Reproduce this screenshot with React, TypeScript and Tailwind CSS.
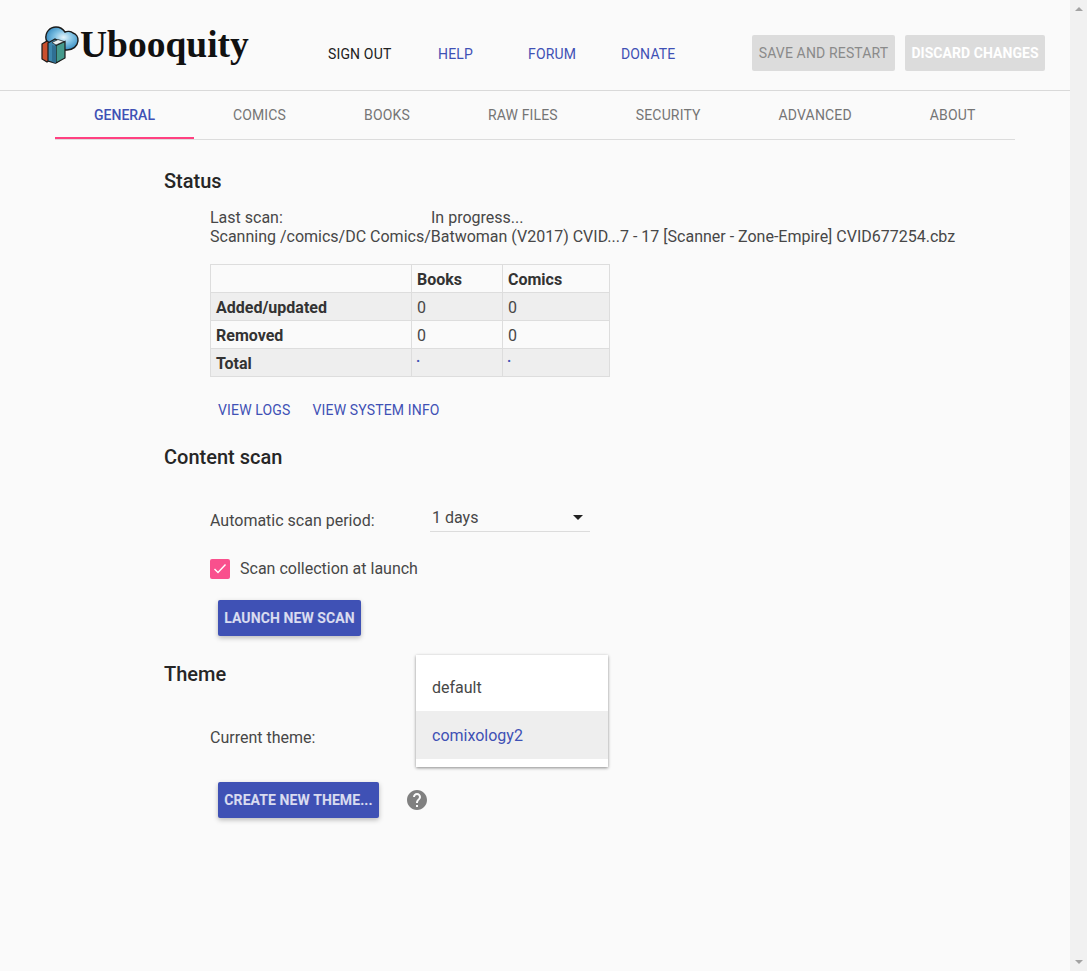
import { MdHelp } from 'react-icons/md'

const tabs = ['General', 'Comics', 'Books', 'Raw files', 'Security', 'Advanced', 'About']

function Logo() {
    return (
        <svg width="40" height="40" viewBox="0 0 40 40" className="shrink-0">
            <defs>
                <radialGradient id="cloud" cx="0.55" cy="0.45" r="0.6">
                    <stop offset="0" stopColor="#e4f3fa" />
                    <stop offset="0.5" stopColor="#7cbfe2" />
                    <stop offset="1" stopColor="#2f86bd" />
                </radialGradient>
            </defs>
            <path d="M6 14 C5 7 10 2 16 2 C20 2 23 4 25 7 C27 6 31 6 33 8 C36 9 38.5 12 38 16 C37.5 21 33 25 27 25 L14 25 L8 20 Z" fill="url(#cloud)" stroke="#1a1a1a" strokeWidth="1.4" />
            <path d="M2 19 L7 16 L10 18 L10 35 L7 37 L2 34 Z" fill="#c9502e" stroke="#1a1a1a" strokeWidth="1.2" />
            <path d="M8 18 L15 14 L19 16 L19 36 L15 38 L8 36 Z" fill="#3d87ad" stroke="#1a1a1a" strokeWidth="1.2" />
            <path d="M16 20.5 L25 16.5 L25 33 L16 38 Z" fill="#459a8c" stroke="#1a1a1a" strokeWidth="1.2" />
            <path d="M12 17.5 L18 14.5 L24 16.5 L16 20 Z" fill="#e8f0f2" stroke="#1a1a1a" strokeWidth="0.7" />
            <path d="M12 20 L16 21 L16 38 L12 37 Z" fill="#2f6f93" />
        </svg>
    )
}

function Heading({ children, className }: { children: string; className: string }) {
    return <h2 className={`text-[20px] leading-[28px] font-medium text-[#262626] ${className}`}>{children}</h2>
}

function RaisedButton({ children, className }: { children: string; className: string }) {
    return (
        <button className={`h-9 rounded-[2px] bg-[#3f51b5] text-sm font-bold tracking-[0.1px] text-white/80 uppercase shadow-[0_2px_5px_rgba(0,0,0,0.26)] ${className}`}>
            {children}
        </button>
    )
}

export default function App() {
    return (
        <div className="flex h-[971px] overflow-hidden bg-[#fafafa] font-['Roboto',sans-serif] text-[#474747]">
            <div className="w-[1070px] shrink-0">
                <header className="flex h-[91px] items-center border-b border-[#d9d9d9] text-sm tracking-[0.15px] uppercase">
                    <div className="ml-[40px] flex w-[288px] items-center">
                        <Logo />
                        <span className="font-['Liberation_Serif',serif] text-[37.5px] leading-none font-bold tracking-normal text-[#111] normal-case">Ubooquity</span>
                    </div>
                    <a className="mt-[18px] w-[110px] text-[#212121]">Sign out</a>
                    <a className="mt-[18px] w-[90px] text-[#3f51b5]">Help</a>
                    <a className="mt-[18px] w-[93px] text-[#3f51b5]">Forum</a>
                    <a className="mt-[18px] w-[131px] text-[#3f51b5]">Donate</a>
                    <button className="mt-[16px] h-9 w-[143px] rounded-[2px] bg-[#dcdcdc] text-sm text-[#8a8a8a] uppercase">Save and restart</button>
                    <button className="mt-[16px] ml-[10px] h-9 w-[140px] rounded-[2px] bg-[#dcdcdc] text-sm font-bold tracking-[0.05px] text-white uppercase">Discard changes</button>
                </header>

                <nav className="ml-[55px] flex h-[49px] w-[960px] border-b border-[#dcdcdc] text-sm whitespace-nowrap uppercase">
                    {tabs.map((tab, i) => (
                        <a
                            key={tab}
                            className={`flex h-[48px] items-center border-b-2 px-[39px] pt-[1px] ${i === 0 ? 'border-[#ff4081] font-medium text-[#3f51b5]' : 'border-transparent tracking-[0.15px] text-[#757575]'}`}
                        >
                            {tab}
                        </a>
                    ))}
                </nav>

                <main className="relative pl-[164px]">
                    <Heading className="mt-[27px]">Status</Heading>

                    <div className="mt-[13px] ml-[46px] text-base leading-[19px]">
                        <div className="flex">
                            <span className="w-[221px]">Last scan:</span>
                            <span>In progress...</span>
                        </div>
                        <div>Scanning /comics/DC Comics/Batwoman (V2017) CVID...7 - 17 [Scanner - Zone-Empire] CVID677254.cbz</div>
                    </div>

                    <table className="mt-[18px] ml-[46px] w-[399px] table-fixed border-collapse text-base leading-[25px]">
                        <colgroup>
                            <col className="w-[201px]" />
                            <col className="w-[91px]" />
                            <col className="w-[107px]" />
                        </colgroup>
                        <tbody>
                            <tr className="h-[28px]">
                                <td className="border border-[#dddddd] px-[5px] py-0"></td>
                                <th className="border border-[#dddddd] px-[5px] pt-[1px] pb-0 text-left font-bold text-[#333]">Books</th>
                                <th className="border border-[#dddddd] px-[5px] pt-[1px] pb-0 text-left font-bold text-[#333]">Comics</th>
                            </tr>
                            <tr className="h-[28px] bg-[#eeeeee]">
                                <th className="border border-[#dddddd] px-[5px] pt-[1px] pb-0 text-left font-bold text-[#333]">Added/updated</th>
                                <td className="border border-[#dddddd] px-[5px] pt-[1px] pb-0">0</td>
                                <td className="border border-[#dddddd] px-[5px] pt-[1px] pb-0">0</td>
                            </tr>
                            <tr className="h-[28px]">
                                <th className="border border-[#dddddd] px-[5px] pt-[1px] pb-0 text-left font-bold text-[#333]">Removed</th>
                                <td className="border border-[#dddddd] px-[5px] pt-[1px] pb-0">0</td>
                                <td className="border border-[#dddddd] px-[5px] pt-[1px] pb-0">0</td>
                            </tr>
                            <tr className="h-[28px] bg-[#eeeeee]">
                                <th className="border border-[#dddddd] px-[5px] pt-[1px] pb-0 text-left font-bold text-[#333]">Total</th>
                                <td className="border border-[#dddddd] py-0 pr-[5px] pl-[4px] align-top text-sm leading-[24px] font-bold text-[#3f51b5]">·</td>
                                <td className="border border-[#dddddd] py-0 pr-[5px] pl-[4px] align-top text-sm leading-[24px] font-bold text-[#3f51b5]">·</td>
                            </tr>
                        </tbody>
                    </table>

                    <div className="mt-[24px] ml-[54px] flex gap-[22px] text-sm leading-[18px] tracking-[0.15px] text-[#3f51b5] uppercase">
                        <a>View logs</a>
                        <a>View system info</a>
                    </div>

                    <Heading className="mt-[24px]">Content scan</Heading>

                    <div className="mt-[37px] ml-[46px] flex text-base">
                        <span className="mt-[3px] w-[220px] leading-[19px]">Automatic scan period:</span>
                        <div className="flex h-[24px] w-[160px] items-start justify-between border-b border-[#dcdcdc] pr-[7px] pl-[2px] leading-[19px]">
                            <span>1 days</span>
                            <span className="mt-[7px] h-0 w-0 border-x-[5px] border-t-[5px] border-x-transparent border-t-[#212121]"></span>
                        </div>
                    </div>

                    <label className="mt-[27px] ml-[46px] flex items-center text-base leading-[20px]">
                        <span className="flex h-5 w-5 items-center justify-center rounded-[2px] bg-[#f9508d]">
                            <svg width="14" height="14" viewBox="0 0 14 14" fill="none">
                                <path d="M1.5 7 L5 10.5 L12.5 2.5" stroke="#fff" strokeWidth="1.4" />
                            </svg>
                        </span>
                        <span className="ml-[10px]">Scan collection at launch</span>
                    </label>

                    <RaisedButton className="mt-[21px] ml-[54px] block w-[143px]">Launch new scan</RaisedButton>

                    <Heading className="mt-[24px]">Theme</Heading>

                    <div className="relative mt-[40px] ml-[46px] text-base leading-[19px]">
                        <span>Current theme:</span>
                        <div className="absolute top-[-73px] left-[206px] w-[192px] bg-white pt-[8px] pb-[8px] shadow-[0_1px_3px_rgba(0,0,0,0.45)]">
                            <div className="flex h-[48px] items-center px-[16px]">default</div>
                            <div className="flex h-[48px] items-center bg-[#eeeeee] px-[16px] text-[#3f51b5]">comixology2</div>
                        </div>
                    </div>

                    <div className="mt-[35px] ml-[54px] flex items-center">
                        <RaisedButton className="w-[161px]">Create new theme...</RaisedButton>
                        <MdHelp className="ml-[26px] text-[#808080]" size={24} />
                    </div>
                </main>
            </div>

            <div className="flex w-[17px] shrink-0 flex-col items-center justify-between bg-[#f1f1f1] py-[7px]">
                <span className="h-0 w-0 border-x-[4px] border-b-[4px] border-x-transparent border-b-[#a3a3a3]"></span>
                <span className="h-0 w-0 border-x-[4px] border-t-[4px] border-x-transparent border-t-[#a3a3a3]"></span>
            </div>
        </div>
    )
}
